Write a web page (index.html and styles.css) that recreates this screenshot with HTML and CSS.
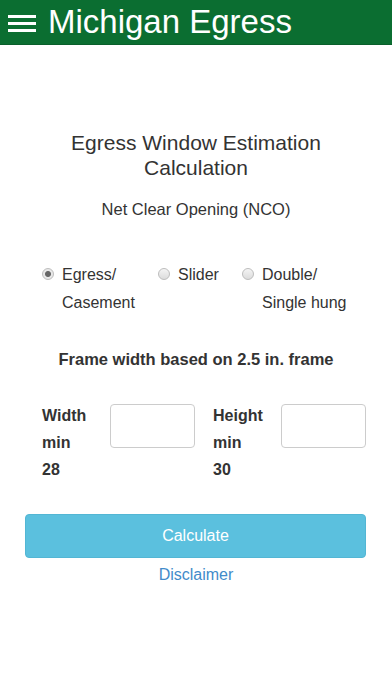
FILE: index.html
```html
<!DOCTYPE html>
<html lang="en">
<head>
    <meta charset="UTF-8">
    <meta name="viewport" content="width=device-width, initial-scale=1.0">
    <title>Michigan Egress</title>
    <link rel="stylesheet" href="styles.css">
</head>
<body>
    <div class="AppHeader">
        <svg class="menuIcon" width="28" height="22" viewBox="0 0 28 22">
            <rect x="0" y="3" width="28" height="3" fill="#fff" />
            <rect x="0" y="10" width="28" height="3" fill="#fff" />
            <rect x="0" y="17" width="28" height="3" fill="#fff" />
        </svg>
        <div class="appTitle">Michigan Egress</div>
    </div>

    <div class="content">
        <div class="pageTitle">Egress Window Estimation<br>Calculation</div>
        <div class="subTitle">Net Clear Opening (NCO)</div>

        <div class="windowTypes">
            <label class="typeOption">
                <input type="radio" name="windowType" value="casement" checked />
                <span>Egress/ Casement</span>
            </label>
            <label class="typeOption">
                <input type="radio" name="windowType" value="slider" />
                <span>Slider</span>
            </label>
            <label class="typeOption">
                <input type="radio" name="windowType" value="hung" />
                <span>Double/ Single hung</span>
            </label>
        </div>

        <div class="frameNote">Frame width based on 2.5 in. frame</div>

        <div class="sizeInputs">
            <div class="sizeField">
                <div class="sizeLabel">Width<br>min<br>28</div>
                <input type="text" class="sizeBox" id="widthInput" />
            </div>
            <div class="sizeField">
                <div class="sizeLabel">Height<br>min<br>30</div>
                <input type="text" class="sizeBox" id="heightInput" />
            </div>
        </div>

        <button class="calcButton">Calculate</button>
        <a class="disclaimer" href="#">Disclaimer</a>
    </div>
</body>
</html>
```

FILE: styles.css
```css
body {
    margin: 0;
    font-family: 'Liberation Sans', Arial, sans-serif;
    background: #fff;
    color: #333;
}

.AppHeader {
    height: 44px;
    background: #0b6e31;
    display: flex;
    align-items: center;
    padding-left: 8px;
    border-bottom: 1px solid #0a5f2b;
}

.menuIcon {
    margin-top: 1px;
    margin-right: 12px;
}

.appTitle {
    color: white;
    font-size: 33px;
    line-height: 44px;
}

.content {
    display: flex;
    flex-direction: column;
}

.pageTitle {
    margin-top: 85px;
    text-align: center;
    font-size: 21px;
    line-height: 25px;
}

.subTitle {
    margin-top: 19px;
    text-align: center;
    font-size: 16.5px;
    line-height: 20px;
}

.windowTypes {
    margin-top: 42px;
    padding-left: 42px;
    display: grid;
    grid-template-columns: 116px 84px auto;
}

.typeOption {
    display: flex;
    align-items: flex-start;
    font-size: 16px;
    line-height: 28px;
}

.typeOption span {
    max-width: 92px;
}

.typeOption input {
    appearance: none;
    -webkit-appearance: none;
    width: 12px;
    height: 12px;
    margin: 7px 8px 0 0;
    border-radius: 50%;
    border: 1px solid #bdbdbd;
    background: linear-gradient(#f4f4f4, #dcdcdc);
    flex-shrink: 0;
}

.typeOption input:checked {
    background: radial-gradient(circle, #666 0 2.5px, #e8e8e8 3.5px);
}

.frameNote {
    margin-top: 32px;
    text-align: center;
    font-size: 16.5px;
    font-weight: 700;
    line-height: 20px;
}

.sizeInputs {
    margin-top: 33px;
    padding: 0 26px 0 42px;
    display: grid;
    grid-template-columns: minmax(0, 1fr) minmax(0, 1fr);
    gap: 18px;
}

.sizeField {
    display: flex;
    align-items: flex-start;
}

.sizeLabel {
    width: 68px;
    flex-shrink: 0;
    font-size: 16px;
    font-weight: 700;
    line-height: 27px;
}

.sizeBox {
    flex: 1;
    width: 0;
    min-width: 0;
    height: 44px;
    margin-top: 2px;
    box-sizing: border-box;
    border: 1px solid #ccc;
    border-radius: 4px;
    font-size: 16px;
    padding: 6px;
}

.calcButton {
    margin: 31px 26px 0 25px;
    height: 44px;
    background: #5bc0de;
    color: white;
    font-family: inherit;
    font-size: 16px;
    border: 1px solid #53b6d4;
    border-radius: 4px;
}

.disclaimer {
    margin-top: 6px;
    text-align: center;
    color: #428bca;
    font-size: 16px;
    line-height: 22px;
    text-decoration: none;
}
```
